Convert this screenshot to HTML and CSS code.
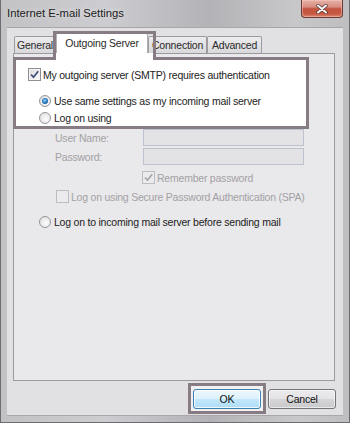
FILE: index.html
```
<!DOCTYPE html>
<html>
<head>
<meta charset="utf-8">
<link rel="stylesheet" href="styles.css">
</head>
<body>
<div class="window">
  <div class="titlebar">
    <span class="title">Internet E-mail Settings</span>
    <div class="close">
      <svg width="12" height="10" viewBox="0 0 12 10">
        <path d="M2 1.5 L10 8.5 M10 1.5 L2 8.5" stroke="#4b3431" stroke-width="3.4" stroke-linecap="round"/>
        <path d="M2 1.5 L10 8.5 M10 1.5 L2 8.5" stroke="#ffffff" stroke-width="1.9" stroke-linecap="round"/>
      </svg>
    </div>
  </div>
  <div class="client">
    <div class="tabs">
      <div class="tab t-general">General</div>
      <div class="tab t-active">Outgoing Server</div>
      <div class="tab t-conn">Connection</div>
      <div class="tab t-adv">Advanced</div>
      <div class="tab-hl"></div>
    </div>
    <div class="panel">
      <div class="auth">
        <div class="row">
          <span class="cb"><svg width="11" height="11" viewBox="0 0 11 11"><path d="M2 5.5 L4.5 8.2 L9.2 2.2" fill="none" stroke="#3f4f7a" stroke-width="1.7"/></svg></span>
          <span>My outgoing server (SMTP) requires authentication</span>
        </div>
        <div class="row radio-row first-radio">
          <span class="rb on"></span>
          <span>Use same settings as my incoming mail server</span>
        </div>
        <div class="row radio-row">
          <span class="rb"></span>
          <span>Log on using</span>
        </div>
      </div>
      <div class="fields">
        <div class="field">
          <span class="lbl">User Name:</span>
          <span class="input"></span>
        </div>
        <div class="field second">
          <span class="lbl">Password:</span>
          <span class="input"></span>
        </div>
      </div>
      <div class="row disabled remember">
        <span class="cb dis"><svg width="11" height="11" viewBox="0 0 11 11"><path d="M2 5.5 L4.5 8.2 L9.2 2.2" fill="none" stroke="#a6a6a8" stroke-width="1.7"/></svg></span>
        <span>Remember password</span>
      </div>
      <div class="row disabled spa">
        <span class="cb dis"></span>
        <span>Log on using Secure Password Authentication (SPA)</span>
      </div>
      <div class="row before">
        <span class="rb"></span>
        <span>Log on to incoming mail server before sending mail</span>
      </div>
    </div>
    <div class="buttons">
      <div class="okwrap"><button class="btn ok">OK</button></div>
      <button class="btn">Cancel</button>
    </div>
  </div>
</div>
</body>
</html>
```
FILE: styles.css
```
html, body {
  margin: 0;
  padding: 0;
  background: #c4c3c6;
}
body {
  font-family: "Liberation Sans", Arial, sans-serif;
}
.window {
  width: 350px;
  height: 423px;
  box-sizing: border-box;
  display: flex;
  flex-direction: column;
  background: linear-gradient(to right, #c2c1c4 0%, #cdccd0 30%, #b3b2b6 60%, #c8c7ca 85%, #bebdc0 100%);
  border: 1px solid #6e6c70;
  border-top: none;
  padding: 0 6px 7px;
}
.titlebar {
  height: 27px;
  flex: none;
  display: flex;
  justify-content: space-between;
  align-items: flex-start;
}
.title {
  font-size: 11.25px;
  line-height: 27px;
  color: #1c1c1c;
  text-shadow: 0 0 6px rgba(255,255,255,0.7);
}
.close {
  width: 42px;
  height: 18px;
  box-sizing: border-box;
  border: 1px solid #6a3a36;
  border-top: none;
  border-radius: 0 0 4px 4px;
  background: linear-gradient(#e6b0a6 0%, #d78f82 40%, #c2533f 52%, #c65842 80%, #d98670 100%);
  display: flex;
  align-items: center;
  justify-content: center;
  box-shadow: inset 0 0 0 1px rgba(255,210,200,0.45);
}
.client {
  flex: 1;
  background: #e1e0e2;
  padding: 3px 8px 1px 6px;
  display: flex;
  flex-direction: column;
  border: 1px solid #a8a6aa;
  border-left: none;
  border-right: none;
}
.tabs {
  position: relative;
  height: 22px;
  flex: none;
  display: flex;
  align-items: flex-end;
  padding-left: 1px;
}
.tab {
  height: 17px;
  box-sizing: border-box;
  border: 1px solid #9d9aa0;
  border-bottom: none;
  border-radius: 2px 2px 0 0;
  background: linear-gradient(#ecebee, #d9d8db);
  font-size: 10.5px;
  letter-spacing: -0.2px;
  color: #2a2a2a;
  display: flex;
  align-items: center;
  justify-content: center;
}
.t-general { width: 42px; }
.t-active {
  width: 92px;
  height: 20px;
  background: #fff;
  border-color: #b2b0b4;
  padding-bottom: 2px;
}
.t-conn { width: 59px; }
.t-adv { width: 55px; }
.tab-hl {
  position: absolute;
  left: 40px;
  top: 0;
  width: 103px;
  height: 29px;
  box-sizing: border-box;
  border: 3px solid #877b84;
  border-bottom: none;
  background: linear-gradient(transparent 19px, #fff 19px);
}
.panel {
  height: 328px;
  flex: none;
  box-sizing: border-box;
  border: 1px solid #9c99a0;
  background: #e9e8ea;
}
.auth {
  margin: 3px 0 0 -1px;
  width: 296px;
  height: 72px;
  box-sizing: border-box;
  border: 3px solid #877b84;
  background: #fff;
  padding: 6px 0 0 12px;
}
.row {
  display: flex;
  align-items: center;
  height: 17px;
  font-size: 10.5px;
  letter-spacing: -0.22px;
  color: #222;
  white-space: nowrap;
}
.radio-row { margin-left: 10px; }
.first-radio { margin-top: 9px; }
.cb {
  width: 13px;
  height: 13px;
  flex: none;
  box-sizing: border-box;
  margin-right: 2px;
  border: 1px solid #8e8f93;
  background: linear-gradient(135deg, #dcdcdc, #fbfbfb);
  box-shadow: inset 0 0 0 1px #f4f4f4;
  display: flex;
  align-items: center;
  justify-content: center;
}
.cb.dis {
  border-color: #bdbcc0;
  background: #ebeaec;
  box-shadow: none;
}
.rb {
  width: 12px;
  height: 12px;
  flex: none;
  box-sizing: border-box;
  margin: 0 3px 0 1px;
  border: 1px solid #97979b;
  border-radius: 50%;
  background: radial-gradient(circle at 60% 60%, #fdfdfd 0%, #e4e4e4 70%, #d2d2d2 100%);
  display: flex;
  align-items: center;
  justify-content: center;
}
.rb.on::after {
  content: "";
  width: 6px;
  height: 6px;
  border-radius: 50%;
  background: radial-gradient(circle at 45% 40%, #9fd8f8 0%, #2a7fc5 45%, #0c3f7c 100%);
}
.disabled { color: #a3a1a5; }
.fields { padding-left: 41px; }
.field {
  display: flex;
  align-items: center;
  height: 17px;
}
.field.second { margin-top: 2px; }
.lbl {
  width: 88px;
  font-size: 10.5px;
  letter-spacing: -0.22px;
  color: #a3a1a5;
}
.input {
  width: 161px;
  height: 17px;
  box-sizing: border-box;
  border: 1px solid #bcc3cf;
  background: #e3e3e5;
}
.remember { margin: 4px 0 0 128px; }
.spa { margin: 2px 0 0 42px; }
.before { margin: 8px 0 0 24px; }
.buttons {
  flex: none;
  display: flex;
  justify-content: flex-end;
  align-items: flex-start;
  gap: 2px;
  margin: 2px -1px 0 0;
}
.okwrap {
  border: 3px solid #877b84;
  padding: 3px 2px 2px;
  background: #f1f1f2;
}
.btn {
  width: 68px;
  height: 20px;
  margin: 0;
  box-sizing: border-box;
  border: 1px solid #757377;
  border-radius: 3px;
  padding: 0;
  background: linear-gradient(#ebeaec 0%, #e4e3e5 50%, #d6d5d8 50%, #c9c8cb 100%);
  box-shadow: inset 0 0 0 1px rgba(255,255,255,0.6);
  font-family: "Liberation Sans", Arial, sans-serif;
  font-size: 10.5px;
  letter-spacing: -0.2px;
  color: #111;
}
.buttons > .btn { margin-top: 6px; }
.btn.ok {
  border-color: #3c7fb1;
  background: linear-gradient(#ecf7fd 0%, #dcf1fc 50%, #c3e8fc 50%, #afdcf5 100%);
  box-shadow: inset 0 0 0 1px rgba(255,255,255,0.8);
}
```
